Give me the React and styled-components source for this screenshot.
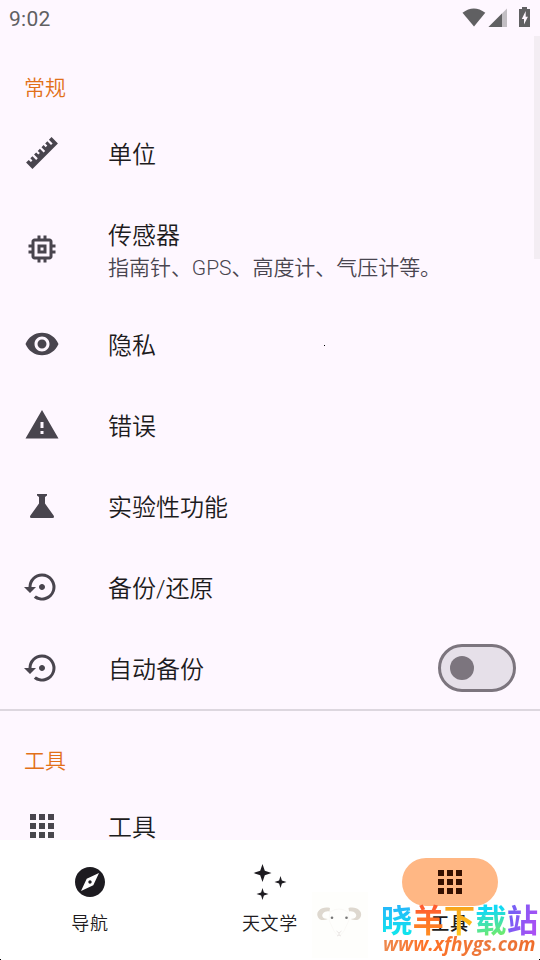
import React from "react";
import styled, { createGlobalStyle } from "styled-components";
import {
  MdApps,
  MdExplore,
  MdMemory,
  MdSettingsBackupRestore,
  MdVisibility,
  MdWarning,
} from "react-icons/md";

const Global = createGlobalStyle`
  *, *::before, *::after { box-sizing: border-box; }
  html, body { margin: 0; padding: 0; overflow: hidden; }
  body { font-family: Roboto, "Noto Sans CJK SC", sans-serif; }
  svg { display: block; }
`;

const Screen = styled.div`
  position: relative;
  display: flex;
  flex-direction: column;
  width: 540px;
  height: 960px;
  overflow: hidden;
  background: #fef7ff;
`;

const StatusBar = styled.header`
  display: flex;
  flex: none;
  align-items: center;
  justify-content: space-between;
  height: 36px;
  padding: 0 9px;
  color: #606062;
`;

const Clock = styled.span`
  font-size: 21px;
  line-height: 24px;
  font-weight: 450;
  letter-spacing: 0.3px;
  padding-top: 2px;
`;

const StatusIcons = styled.svg`
  width: 78px;
  height: 36px;
  margin-right: -9px;
`;

const Settings = styled.main`
  position: relative;
  flex: 1;
  min-height: 0;
  overflow: hidden;
`;

const ScrollThumb = styled.div`
  position: absolute;
  top: 0;
  right: 0;
  width: 6px;
  height: 223px;
  background: #f3edf3;
`;

const Group = styled.section`
  padding: 2px 0 1px;
  border-bottom: 2px solid #ddd7df;
`;

const GroupTitle = styled.h2`
  margin: 0;
  height: 74px;
  padding: 35px 24px 0;
  color: #e27018;
  font-size: 21px;
  font-weight: 350;
  line-height: 30px;
`;

const Row = styled.div`
  display: flex;
  align-items: center;
  height: ${(p) => (p.$tall ? 110 : 81)}px;
  padding: 0 24px;
`;

const RowIcon = styled.span`
  flex: none;
  width: 84px;
  padding-top: ${(p) => (p.$lowered ? 2 : 0)}px;
  color: #49454e;
  svg { width: 36px; height: 36px; }
`;

const RowText = styled.div`
  flex: 1;
  padding-top: 6px;
`;

const RowTitle = styled.div`
  color: #1d1b20;
  font-size: 24px;
  font-weight: 350;
  line-height: 33px;
`;

const RowSummary = styled.div`
  color: #49454f;
  font-size: 21px;
  font-weight: 350;
  letter-spacing: -0.04px;
  line-height: 30px;
`;

const Switch = styled.span`
  display: flex;
  align-items: center;
  width: 78px;
  height: 48px;
  padding-left: 9px;
  border: 3px solid #7c757e;
  border-radius: 24px;
  background: #e6e0e9;
`;

const Thumb = styled.span`
  width: 24px;
  height: 24px;
  border-radius: 50%;
  background: #7c757e;
`;

const Nav = styled.nav`
  display: grid;
  grid-template-columns: repeat(3, 180px);
  flex: none;
  height: 120px;
  padding-top: 18px;
  background: #fff;
`;

const NavItem = styled.div`
  display: flex;
  flex-direction: column;
  align-items: center;
  color: #1d1b20;
`;

const NavPill = styled.span`
  display: grid;
  place-items: center;
  width: 96px;
  height: 48px;
  border-radius: 24px;
  color: ${(p) => (p.$active ? "#351000" : "#1d1b20")};
  background: ${(p) => (p.$active ? "#ffb784" : "transparent")};
  svg { width: 36px; height: 36px; }
`;

const NavLabel = styled.span`
  margin-top: 5px;
  font-size: 18px;
  line-height: 26px;
  letter-spacing: 0.75px;
  font-weight: ${(p) => (p.$active ? 500 : 350)};
`;

const Watermark = styled.div`
  position: absolute;
  left: 310px;
  top: 890px;
  display: flex;
  width: 230px;
  height: 70px;
`;

const Ram = styled.svg`
  flex: none;
  width: 60px;
  height: 70px;
`;

const WatermarkText = styled.div`
  padding-left: 11px;
  white-space: nowrap;
`;

const SiteName = styled.div`
  display: flex;
  height: 41px;
  font: 700 31.4px/58px "Noto Sans CJK SC", sans-serif;
`;

const Glyph = styled.span`
  height: 58px;
  color: transparent;
  background: linear-gradient(${(p) => p.$fill});
  background-clip: text;
  -webkit-background-clip: text;
`;

const SiteUrl = styled.div`
  padding-left: 2px;
  color: transparent;
  background: linear-gradient(90deg, #ec8a50, #ff7024 30%, #e97a3f 70%, #f06b29);
  background-clip: text;
  -webkit-background-clip: text;
  font: italic 700 19px/26px "Open Sans", "Noto Sans", sans-serif;
  letter-spacing: 0.1px;
`;

const Speck = styled.i`
  position: absolute;
  left: ${(p) => p.$x}px;
  top: ${(p) => p.$y}px;
  width: 1px;
  height: 1px;
  background: #000;
`;

const RulerIcon = () => (
  <svg viewBox="0 0 24 24" fill="currentColor">
    <path d="M1.39,18.36L3.16,16.6L4.58,18L5.64,16.95L4.22,15.54L5.64,14.12L8.11,16.6L9.17,15.54L6.7,13.06L8.11,11.65L9.53,13.06L10.59,12L9.17,10.59L10.59,9.17L13.06,11.65L14.12,10.59L11.65,8.11L13.06,6.7L14.47,8.11L15.54,7.05L14.12,5.64L15.54,4.22L18,6.7L19.07,5.64L16.6,3.16L18.36,1.39L22.61,5.64L5.64,22.61Z" />
  </svg>
);

const FlaskIcon = () => (
  <svg viewBox="0 0 36 36" fill="currentColor">
    <path d="M13 6H23V7.5L21 9V15.5L29.6 27.6Q30.8 30 28.5 30H7.5Q5.2 30 6.4 27.6L15 15.5V9L13 7.5Z" />
  </svg>
);

const StarsIcon = () => (
  <svg viewBox="0 0 36 36" fill="currentColor">
    <path d="M10.5 0 L12.8 6.7 L19.5 9 L12.8 11.3 L10.5 18 L8.2 11.3 L1.5 9 L8.2 6.7Z" />
    <path d="M28.5 12 L29.9 16.6 L34.5 18 L29.9 19.4 L28.5 24 L27.1 19.4 L22.5 18 L27.1 16.6Z" />
    <path d="M10.5 24 L11.9 28.6 L16.5 30 L11.9 31.4 L10.5 36 L9.1 31.4 L4.5 30 L9.1 28.6Z" />
  </svg>
);

const RamLogo = () => (
  <Ram viewBox="0 0 60 70" fill="none">
    <rect x="2" y="2" width="56" height="66" fill="#fefefc" />
    <path d="M20 22Q29 16 38 22L39 30L34 41Q29 50 24 41L19 30Z" stroke="#f8f6f4" strokeWidth=".7" />
    <path d="M20 18C12 16 6 21 7.5 26C8.5 30.5 14 31 18 29C13 29 11 26 13 23.5C14.5 21.5 17 21 19.5 21.5Z" fill="#ded8cf" />
    <path d="M38.5 18C46.5 16 52.5 21 51 26C50 30.5 44.5 31 40.5 29C45.5 29 47.5 26 45.5 23.5C44 21.5 41.5 21 39 21.5Z" fill="#ded8cf" />
    <circle cx="22" cy="27.7" r="1.3" fill="#777" />
    <circle cx="36.5" cy="27.7" r="1.3" fill="#777" />
    <path d="M26.5 41L29 43L31.5 41M29 43V45L27 46M29 45L31 46" stroke="#e4e0de" strokeWidth=".8" />
  </Ram>
);

const general = [
  { title: "单位", icon: <RulerIcon /> },
  { title: "传感器", icon: <MdMemory />, summary: "指南针、GPS、高度计、气压计等。" },
  { title: "隐私", icon: <MdVisibility /> },
  { title: "错误", icon: <MdWarning /> },
  { title: "实验性功能", icon: <FlaskIcon /> },
  { title: "备份/还原", icon: <MdSettingsBackupRestore /> },
  { title: "自动备份", icon: <MdSettingsBackupRestore />, toggle: true },
];

const tabs = [
  { label: "导航", icon: <MdExplore /> },
  { label: "天文学", icon: <StarsIcon /> },
  { label: "工具", icon: <MdApps />, active: true },
];

const siteGlyphs = [
  ["晓", "180deg, #25b9fa 30%, #10e4ed 75%"],
  ["羊", "180deg, #ff5c30 30%, #ff8b22 75%"],
  ["下", "180deg, #f7a51c 30%, #ffc51b 75%"],
  ["载", "170deg, #12d9f5 35%, #6bea72 75%"],
  ["站", "110deg, #7260f5 20%, #a950f4 80%"],
];

const Preference = ({ title, icon, summary, toggle }) => (
  <Row $tall={Boolean(summary)}>
    <RowIcon $lowered={Boolean(summary)}>{icon}</RowIcon>
    <RowText>
      <RowTitle>{title}</RowTitle>
      {summary && <RowSummary>{summary}</RowSummary>}
    </RowText>
    {toggle && (
      <Switch role="switch" aria-checked="false">
        <Thumb />
      </Switch>
    )}
  </Row>
);

export default function App() {
  return (
    <>
      <Global />
      <Screen>
        <StatusBar>
          <Clock>9:02</Clock>
          <StatusIcons viewBox="462 0 78 36" fill="currentColor">
            <path d="M462.5 12.7Q473.8 4.2 485.3 12.7L474 26.5Z" />
            <path d="M507 8.5V27H488.5Z" opacity=".38" />
            <path d="M502 13.5V27H488.5Z" />
            <path d="M522 7h5v2h3v18h-11V9h3Z" />
            <path d="M525.7 11L521.8 19H524V24.5L527.9 16.8H525.7Z" fill="#fef7ff" />
          </StatusIcons>
        </StatusBar>
        <Settings>
          <Group>
            <GroupTitle>常规</GroupTitle>
            {general.map((item) => (
              <Preference key={item.title} {...item} />
            ))}
          </Group>
          <GroupTitle>工具</GroupTitle>
          <Preference title="工具" icon={<MdApps />} />
          <ScrollThumb />
        </Settings>
        <Nav>
          {tabs.map(({ label, icon, active }) => (
            <NavItem key={label}>
              <NavPill $active={active}>{icon}</NavPill>
              <NavLabel $active={active}>{label}</NavLabel>
            </NavItem>
          ))}
        </Nav>
        <Watermark>
          <RamLogo />
          <WatermarkText>
            <SiteName>
              {siteGlyphs.map(([char, fill]) => (
                <Glyph key={char} $fill={fill}>{char}</Glyph>
              ))}
            </SiteName>
            <SiteUrl>www.xfhygs.com</SiteUrl>
          </WatermarkText>
        </Watermark>
        <Speck $x={324} $y={345} />
        <Speck $x={0} $y={959} />
        <Speck $x={539} $y={959} />
      </Screen>
    </>
  );
}
